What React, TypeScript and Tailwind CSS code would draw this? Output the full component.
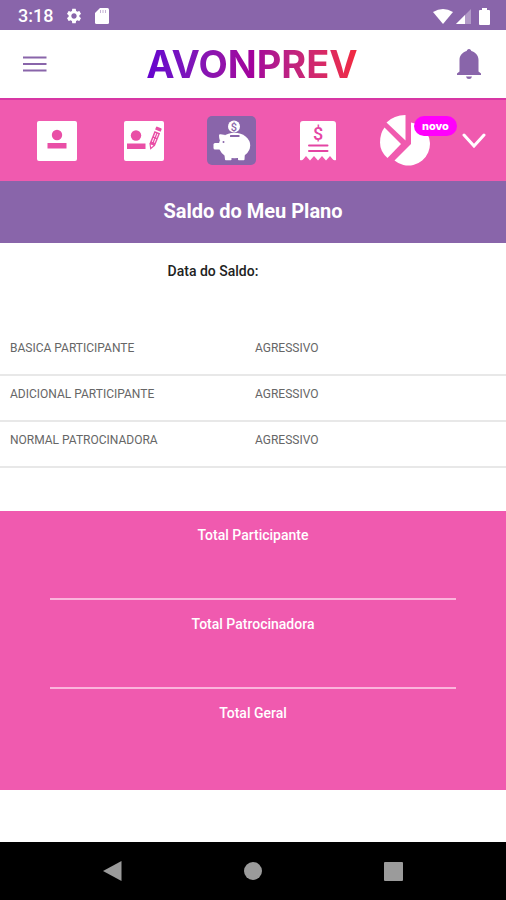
import type { ReactNode } from "react";
import { MdSettings } from "react-icons/md";

const BALANCES = [
  { name: "BASICA PARTICIPANTE", profile: "AGRESSIVO" },
  { name: "ADICIONAL PARTICIPANTE", profile: "AGRESSIVO" },
  { name: "NORMAL PATROCINADORA", profile: "AGRESSIVO" },
];

const TOTALS = ["Total Participante", "Total Patrocinadora", "Total Geral"];

function StatusBar() {
  return (
    <div className="flex h-[30px] items-center justify-between bg-[#8965aa] pr-4 pl-[18px] pt-[2px] text-white">
      <div className="flex items-center">
        <span className="text-[18px] leading-[22px] font-medium">3:18</span>
        <MdSettings className="ml-3 size-[18px]" />
        <svg className="ml-3 h-4 w-[14px]" viewBox="0 0 14 16" fill="currentColor">
          <path d="M5 0h7.500q1.500 0 1.500 1.500v13q0 1.500-1.500 1.500h-11q-1.500 0-1.500-1.500V5z" />
          <path d="M5.500 2v3M8 2v3M10.500 2v3" stroke="#8965aa" strokeOpacity="0.5" />
        </svg>
      </div>
      <div className="flex items-center">
        <svg className="h-[15px] w-5" viewBox="0 0 20 15" fill="currentColor">
          <path d="M0 3Q10-3 20 3L10 15z" />
        </svg>
        <svg className="ml-[3px] h-[15px] w-[15px]" viewBox="0 0 15 15" fill="currentColor">
          <path d="M15 0v15H0z" opacity="0.35" />
          <path d="M9 6v9H0z" />
        </svg>
        <svg className="ml-2 h-[17px] w-[11px]" viewBox="0 0 11 17" fill="currentColor">
          <path d="M3 0h5v2h2q1 0 1 1v13q0 1-1 1H1q-1 0-1-1V3q0-1 1-1h2z" />
        </svg>
      </div>
    </div>
  );
}

function Header() {
  return (
    <header className="flex h-[70px] items-center justify-between border-b-2 border-[#d836a4] bg-white pr-[18px] pl-4 text-[#8965aa]">
      <button type="button" aria-label="Menu" className="flex size-[38px] items-center justify-center">
        <svg className="h-4 w-6" viewBox="0 0 24 16" fill="currentColor">
          <path d="M0 0.500h23.500v2H0zM0 7h23.500v2H0zM0 13.500h23.500v2H0z" />
        </svg>
      </button>
      <h1 className="bg-linear-to-r from-[#6500cf] via-[#a3009c] to-[#f32a3d] bg-clip-text font-['Inter',sans-serif] text-[38px] leading-[44px] font-bold text-transparent">
        AVONPREV
      </h1>
      <button type="button" aria-label="Notificações" className="flex size-[38px] items-center justify-center">
        <svg className="h-[30px] w-[26px]" viewBox="0 0 26 30" fill="currentColor">
          <path d="M13 0c1.500 0 2 1 2.300 2 4.200 1.200 7.200 4.500 7.200 9v11.500l2.500 2v1.500H1v-1.500l2.500-2V11c0-4.500 3-7.800 7.200-9C11 1 11.500 0 13 0z" />
          <path d="M10 27.500h6q-.5 2.500-3 2.500t-3-2.500z" />
        </svg>
      </button>
    </header>
  );
}

function ProfileIcon() {
  return (
    <svg className="size-10" viewBox="0 0 40 40">
      <rect width="40" height="40" rx="2" fill="#fff" />
      <circle cx="20" cy="14" r="5.200" fill="#e94fa6" />
      <rect x="10.500" y="22" width="19" height="5.500" fill="#e94fa6" />
    </svg>
  );
}

function EditProfileIcon() {
  return (
    <svg className="size-10" viewBox="0 0 40 40">
      <rect width="40" height="40" rx="2" fill="#fff" />
      <g fill="#e94fa6">
        <circle cx="12" cy="14.500" r="5.200" />
        <rect x="3" y="22.500" width="18.500" height="5.500" />
        <g transform="translate(30.500 18) rotate(22)">
          <path d="M-3-11.500q0-1 1-1h4q1 0 1 1v2.500h-6z" />
          <path d="M-3-7.500h6V6L0 11.500-3 6z" />
          <path d="M-1-6v10.500M1.200-6v10.500" stroke="#fff" strokeWidth="0.900" strokeDasharray="4 1.500" />
          <path d="M-1.500 6.500h3L0 9z" fill="#fff" />
        </g>
      </g>
    </svg>
  );
}

function PiggyIcon() {
  return (
    <span className="block rounded-[5px] bg-[#8965aa]">
      <svg className="size-[49px]" viewBox="0 0 49 49" fill="#fff">
        <circle cx="27" cy="10.500" r="6" />
        <text x="27" y="14.500" textAnchor="middle" fontSize="11" fontWeight="500" fill="#8965aa">
          $
        </text>
        <ellipse cx="27.500" cy="29.500" rx="15.700" ry="12.700" />
        <path d="M12 19.500q0-1.500 1.500-1.200l5 .7-5.500 6q-1-2.500-1-5.500z" />
        <path d="M14 27H8q-1.500 0-1.500 1.500V32q0 1.500 1.500 1.500h6z" />
        <path d="M17 35h7.500v8.500q0 .8-.8.800h-4.900q-.8 0-.8-.8zM31 38l7-3-.5 8.500q0 .8-.8.800h-4.900q-.8 0-.8-.8z" />
        <rect x="23" y="19" width="9.500" height="2" rx="0.500" fill="#8965aa" />
        <circle cx="16.500" cy="26" r="1" fill="#8965aa" />
      </svg>
    </span>
  );
}

function ReceiptIcon() {
  return (
    <svg className="h-10 w-9" viewBox="0 0 36 40">
      <path
        d="M3 0h30q3 0 3 3v36q-2 1-3.500-1L30 35l-4 4.500L22 35l-4 4.500L14 35l-4 4.500L6 35l-2.500 3Q2 40 0 39V3q0-3 3-3z"
        fill="#fff"
      />
      <text x="18" y="18.500" textAnchor="middle" fontSize="18" fontWeight="500" fill="#e445a3">
        $
      </text>
      <path d="M9 24.500h18.500M9 30h18.500" stroke="#e445a3" strokeWidth="2" strokeLinecap="round" />
    </svg>
  );
}

function PieIcon() {
  return (
    <span className="relative block">
      <svg className="size-[51px]" viewBox="0 0 51 51" fill="#fff">
        <path d="M25.500 0v25.500L6.500 7.500Q14 0 25.500 0z" />
        <path d="M4.500 12.500L21 29 7.500 43Q0 36.500 0 27.500T4.500 12.500z" />
        <path d="M31 7.500A21.600 21.600 0 1 1 14.500 45.500L31 29z" />
      </svg>
      <span className="absolute top-px left-[34px] rounded-full bg-[#ff00fc] px-2 font-['Inter',sans-serif] text-[11px] leading-5 font-extrabold text-white">
        novo
      </span>
    </span>
  );
}

function NavButton({ label, children }: { label: string; children: ReactNode }) {
  return (
    <button type="button" aria-label={label} className="flex h-full flex-1 items-center justify-center">
      {children}
    </button>
  );
}

function Navigation() {
  return (
    <nav className="flex h-[81px] items-center bg-[#f05aaf] pr-[7px] pl-[13px]">
      <NavButton label="Perfil">
        <ProfileIcon />
      </NavButton>
      <NavButton label="Editar perfil">
        <EditProfileIcon />
      </NavButton>
      <NavButton label="Saldo">
        <PiggyIcon />
      </NavButton>
      <NavButton label="Extrato">
        <ReceiptIcon />
      </NavButton>
      <NavButton label="Rentabilidade">
        <PieIcon />
      </NavButton>
      <button type="button" aria-label="Mais opções" className="flex h-full w-[50px] items-center justify-center">
        <svg className="h-[15px] w-6" viewBox="0 0 24 15" fill="none" stroke="#fff" strokeWidth="3">
          <path d="M2 2l10 11L22 2" strokeLinecap="round" />
        </svg>
      </button>
    </nav>
  );
}

function SystemBar() {
  return (
    <div className="mt-auto flex h-[58px] items-center bg-black px-[42px] text-[#9b9b9b]">
      <button type="button" aria-label="Voltar" className="flex flex-1 justify-center">
        <svg className="h-5 w-[19px]" viewBox="0 0 19 20" fill="currentColor">
          <path d="M18.500 0v20L0 10z" />
        </svg>
      </button>
      <button type="button" aria-label="Início" className="flex flex-1 justify-center">
        <span className="size-[18px] rounded-full bg-current" />
      </button>
      <button type="button" aria-label="Recentes" className="flex flex-1 justify-center">
        <span className="size-[19px] rounded-[1px] bg-current" />
      </button>
    </div>
  );
}

export default function App() {
  return (
    <div className="flex min-h-screen flex-col bg-white font-['Roboto',sans-serif]">
      <StatusBar />
      <Header />
      <Navigation />
      <main className="pb-[52px]">
        <h2 className="bg-[#8965aa] pt-4 pb-[18px] text-center text-[20px] leading-7 font-bold text-white">
          Saldo do Meu Plano
        </h2>
        <div className="flex justify-center pt-[18px] pb-[49px] text-[14px] leading-5 font-medium text-[#222]">
          <span>Data do Saldo:</span>
          {/* room for the date */}
          <span className="w-20" />
        </div>
        <table className="w-full border-collapse text-left text-[12px] leading-4 text-[#666]">
          <tbody>
            {BALANCES.map((balance) => (
              <tr key={balance.name} className="border-b-2 border-[#e8e8e8]">
                <td className="w-1/2 pt-[10px] pb-[18px] pl-[10px]">{balance.name}</td>
                <td className="w-1/2 pt-[10px] pb-[18px] pl-[2px]">{balance.profile}</td>
              </tr>
            ))}
          </tbody>
        </table>
        <section className="mt-[43px] bg-[#f05aaf] px-[50px] pb-3">
          {TOTALS.map((total) => (
            <div
              key={total}
              className="h-[89px] border-b-2 border-[#fbb5dc] pt-[14px] text-center text-[14px] leading-5 font-medium text-white last:border-b-0"
            >
              {total}
            </div>
          ))}
        </section>
      </main>
      <SystemBar />
    </div>
  );
}
